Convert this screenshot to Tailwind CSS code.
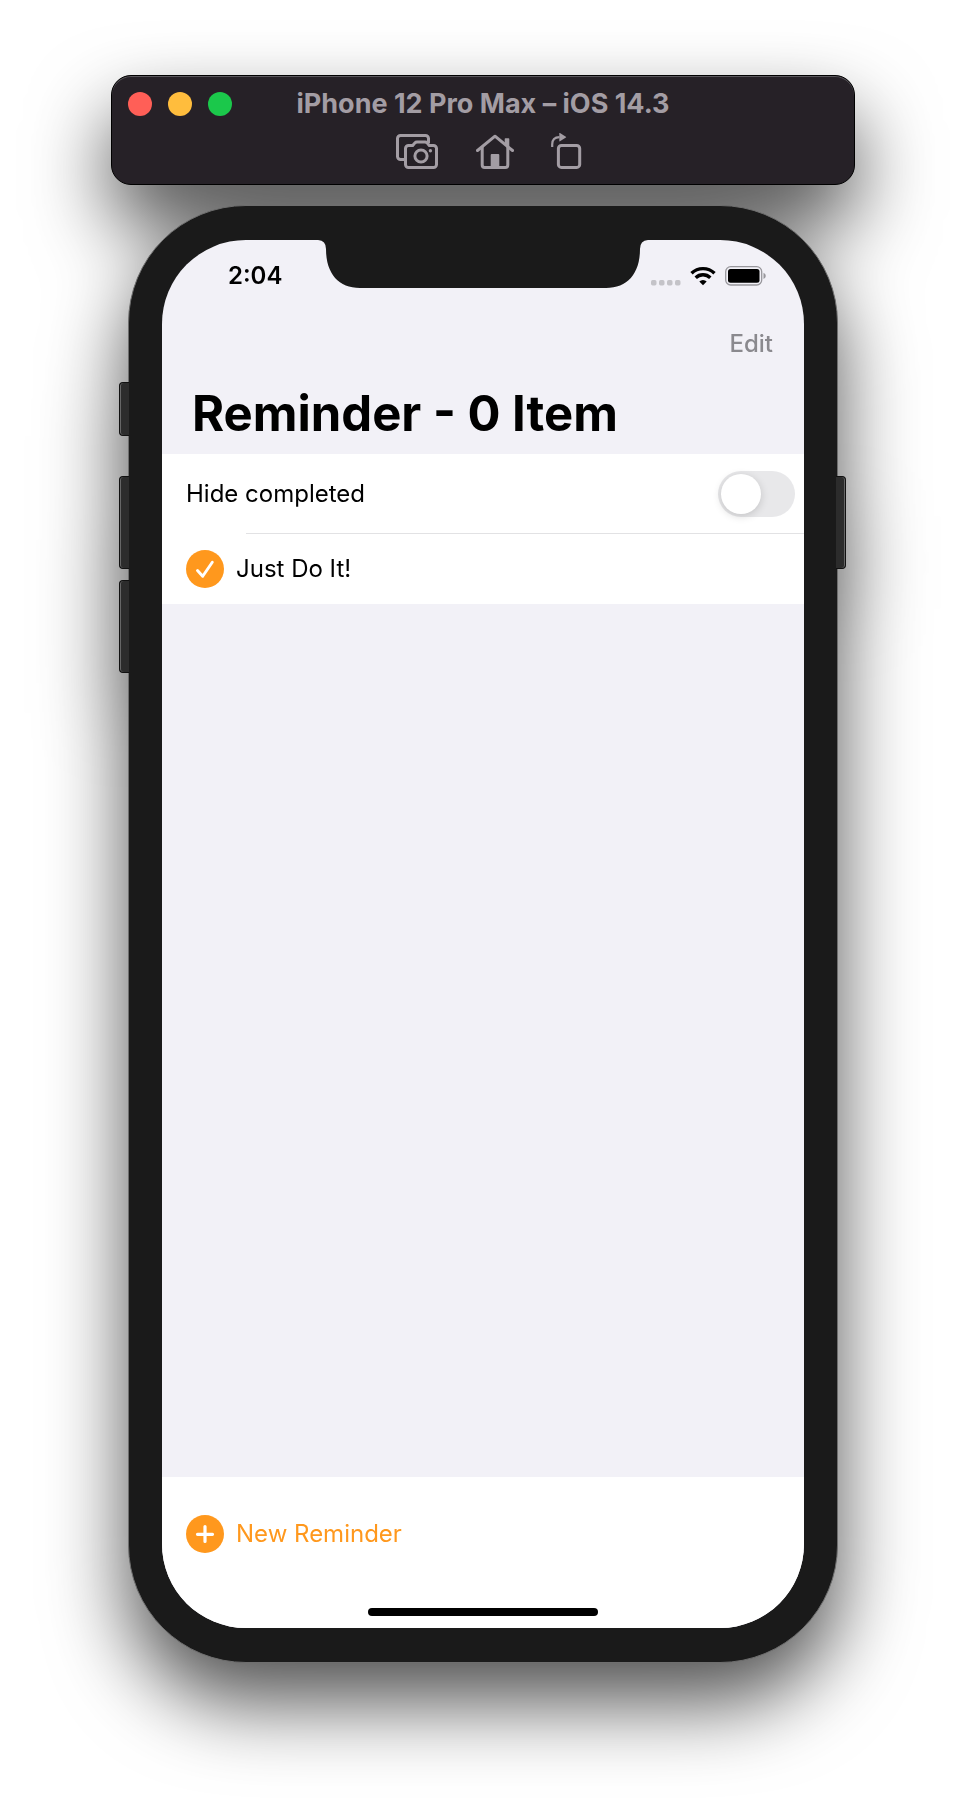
<!DOCTYPE html>
<html lang="en">
<head>
<meta charset="utf-8">
<meta name="viewport" content="width=device-width, initial-scale=1">
<title>Reminder</title>
<script src="https://cdn.jsdelivr.net/npm/@tailwindcss/browser@4"></script>
</head>
<body class="bg-white font-['Inter',sans-serif] text-black">
<div class="flex min-h-screen flex-col gap-[21px] px-[111px] pt-[75px] pb-[150px] drop-shadow-[0_40px_40px_rgba(0,0,0,0.68)]">

  <!-- Simulator toolbar -->
  <header class="flex h-[110px] flex-col rounded-[20px] border border-black bg-[#262127] pt-4 text-[#a39da4] shadow-[inset_0_1px_0_#5a575c]">
    <div class="grid grid-cols-[1fr_auto_1fr] items-center px-4">
      <div class="flex gap-4">
        <button aria-label="Close" class="size-6 rounded-full bg-[#ff5f57]"></button>
        <button aria-label="Minimize" class="size-6 rounded-full bg-[#ffbd3d]"></button>
        <button aria-label="Zoom" class="size-6 rounded-full bg-[#1bc84b]"></button>
      </div>
      <h1 class="text-[27px] leading-6 font-bold">iPhone 12 Pro Max – iOS 14.3</h1>
    </div>
    <div class="mt-[17px] flex justify-center gap-[37px] pl-[11px]">
      <button aria-label="Screenshot">
        <svg class="block" width="43" height="36" viewBox="0 0 43 36" fill="none" stroke="currentColor" stroke-width="3" stroke-linejoin="round">
          <path d="M9 26.500H4.500a3 3 0 0 1-3-3v-18a3 3 0 0 1 3-3h25a3 3 0 0 1 3 3V10"/>
          <path d="M12.500 12.500h4.200l2.200-2.600q.8-.9 2-.9h8.200q1.200 0 2 .9l2.200 2.600h4.200a3 3 0 0 1 3 3v16a3 3 0 0 1-3 3h-25a3 3 0 0 1-3-3v-16a3 3 0 0 1 3-3z"/>
          <circle cx="25" cy="23" r="6.100"/>
          <circle cx="34.400" cy="17.700" r="1.700" fill="currentColor" stroke="none"/>
        </svg>
      </button>
      <button aria-label="Home">
        <svg class="block" width="38" height="36" viewBox="0 0 38 36" fill="none" stroke="currentColor" stroke-width="3" stroke-linecap="round" stroke-linejoin="round">
          <path d="M1.500 17.500 19 3.200 36.500 17.500"/>
          <path d="M6.200 14.500V32q0 2.500 2.500 2.500h20.600q2.500 0 2.500-2.500V14.500"/>
          <path d="M14.700 22q0-1 1-1h6.600q1 0 1 1v13h-8.600zM28.700 6q0-.7.7-.7h3.200q.700 0 .700.700v9.500l-4.600-3.700z" fill="currentColor" stroke="none"/>
        </svg>
      </button>
      <button aria-label="Rotate">
        <svg class="block" width="31" height="36" viewBox="0 0 31 36" fill="none" stroke="currentColor" stroke-width="3">
          <rect x="7.400" y="12.500" width="21.300" height="21.900" rx="3"/>
          <path d="M1.200 14v-2.500Q1.200 4.300 8.500 4.200" stroke-width="2.200"/>
          <path d="M8.300.400q0-.700.700-.3l5.900 3.700q.5.400 0 .8L9 8.300q-.7.400-.7-.3z" fill="currentColor" stroke="none"/>
        </svg>
      </button>
    </div>
  </header>

  <!-- Device body -->
  <main class="relative mx-[17px] -mt-px -mb-px flex flex-1 flex-col rounded-[118px] border border-[#6e6e6e] bg-[#1a1a1a] px-[33px] py-[34px]">
    <!-- Hardware buttons -->
    <div class="absolute top-[176px] -left-[10px] h-[54px] w-[10px] rounded-l-[4px] border border-r-0 border-[#111] bg-[#2c2c2c] shadow-[inset_1px_0_0_#666]"></div>
    <div class="absolute top-[270px] -left-[10px] h-[93px] w-[10px] rounded-l-[4px] border border-r-0 border-[#111] bg-[#2c2c2c] shadow-[inset_1px_0_0_#666]"></div>
    <div class="absolute top-[374px] -left-[10px] h-[93px] w-[10px] rounded-l-[4px] border border-r-0 border-[#111] bg-[#2c2c2c] shadow-[inset_1px_0_0_#666]"></div>
    <div class="absolute top-[270px] -right-[9px] h-[93px] w-[10px] rounded-r-[4px] border border-l-0 border-[#111] bg-[#2c2c2c] shadow-[inset_-1px_0_0_#666]"></div>

    <div class="relative flex flex-1 flex-col overflow-hidden rounded-[84px] bg-[#f2f1f7]">
      <svg class="absolute top-0 left-1/2 -translate-x-1/2" width="330" height="48" viewBox="0 0 330 48" fill="#1a1a1a" aria-hidden="true">
        <path d="M0 0Q8 .500 8 9C8 34 21 48 42 48H288C309 48 322 34 322 9Q322 .500 330 0z"/>
      </svg>

      <div class="flex h-[72px] items-center justify-between pr-[38px] pl-[66px]">
        <time class="text-2xl font-semibold">2:04</time>
        <div class="flex items-center gap-[9px]">
          <svg width="30" height="20" viewBox="0 0 30 20" fill="#c4c3c8" aria-label="No signal">
            <rect x="0" y="14" width="5.500" height="5.500" rx="1.700"/><rect x="8" y="14" width="5.500" height="5.500" rx="1.700"/><rect x="16" y="14" width="5.500" height="5.500" rx="1.700"/><rect x="24" y="14" width="5.500" height="5.500" rx="1.700"/>
          </svg>
          <svg width="26" height="20" viewBox="0 0 26 20" fill="none" stroke="#000" stroke-width="3.400" aria-label="Wi-Fi">
            <path d="M1.500 7.300a16.500 16.500 0 0 1 23 0"/>
            <path d="M5.700 11.700a10.400 10.400 0 0 1 14.600 0"/>
            <path d="M13 19.300 9.300 15.500a5.300 5.300 0 0 1 7.400 0z" fill="#000" stroke="none"/>
          </svg>
          <svg width="41" height="20" viewBox="0 0 41 20" aria-label="Battery full">
            <rect x=".7" y=".7" width="36" height="18.300" rx="5" fill="none" stroke="#98979c" stroke-width="1.300"/>
            <rect x="3" y="3" width="31.500" height="13.700" rx="2.500"/>
            <path d="M38.500 6.800q2.300 1 2.300 3.100t-2.300 3.100z" fill="#98979c"/>
          </svg>
        </div>
      </div>

      <div class="flex h-16 items-center justify-end pr-[31px]">
        <button class="text-2xl font-medium text-[#8a898e]">Edit</button>
      </div>
      <h2 class="flex h-[78px] items-center pb-1 pl-[30px] text-[49px] leading-none font-bold">Reminder - 0 Item</h2>

      <div class="bg-white">
        <div class="flex h-[79px] items-center justify-between pr-[9px] pl-6 text-2xl">
          <label for="hide">Hide completed</label>
          <input id="hide" type="checkbox" role="switch" class="h-[46px] w-[77px] appearance-none rounded-full bg-[#e8e8ea] p-[3px] before:block before:size-10 before:rounded-full before:bg-white before:shadow-[0_2px_8px_rgba(0,0,0,0.16)] before:content-[''] checked:bg-[#ff981d] checked:pl-[34px]">
        </div>
        <div class="ml-[84px] h-px bg-[#e2e2e4]"></div>
        <button class="flex h-[70px] w-full items-center gap-3 pl-6 text-2xl">
          <svg width="38" height="38" viewBox="0 0 38 38" aria-hidden="true"><circle cx="19" cy="19" r="19" fill="#ff981d"/><path d="M11.500 20.500 16.700 26.300 26.300 12.300" fill="none" stroke="#fff" stroke-width="2.900" stroke-linecap="round" stroke-linejoin="round"/></svg>
          Just Do It!
        </button>
      </div>

      <footer class="mt-auto flex flex-col bg-white pt-[38px] pb-3">
        <button class="flex h-[38px] items-center gap-3 self-start pl-6 text-2xl text-[#ff981d]">
          <svg width="38" height="38" viewBox="0 0 38 38" aria-hidden="true"><circle cx="19" cy="19" r="19" fill="#ff981d"/><path d="M19 11.500v15M11.500 19.300h15" fill="none" stroke="#fff" stroke-width="3.200" stroke-linecap="round"/></svg>
          New Reminder
        </button>
        <div class="mt-[55px] h-2 w-[230px] self-center rounded-full bg-black"></div>
      </footer>
    </div>
  </main>
</div>
</body>
</html>
